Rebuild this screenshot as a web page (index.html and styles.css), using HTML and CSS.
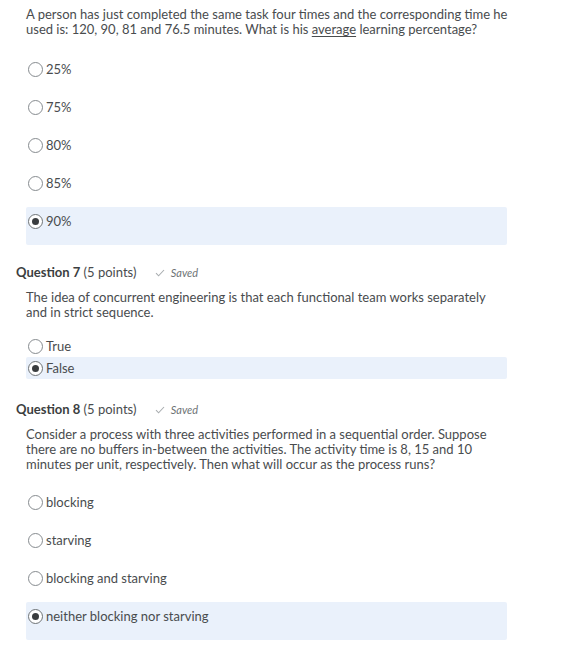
FILE: index.html
```html
<!DOCTYPE html>
<html>
<head>
<meta charset="utf-8">
<link rel="stylesheet" href="styles.css">
</head>
<body>
<div class="page">
  <section class="question">
    <div class="qbody">
      <p class="qtext wide">A person has just completed the same task four times and the corresponding time he used is: 120, 90, 81 and 76.5 minutes. What is his <u>average</u> learning percentage?</p>
      <div class="options tall">
        <div class="opt"><span class="radio"></span><span>25%</span></div>
        <div class="opt"><span class="radio"></span><span>75%</span></div>
        <div class="opt"><span class="radio"></span><span>80%</span></div>
        <div class="opt"><span class="radio"></span><span>85%</span></div>
        <div class="opt selected"><span class="radio checked"></span><span>90%</span></div>
      </div>
    </div>
  </section>

  <section class="question q7">
    <h3 class="qhead"><b>Question 7</b> (5 points) <span class="saved"><svg class="check" viewBox="0 0 10 8" width="10" height="8"><path d="M1 4.2 L3.6 6.8 L9 1" fill="none" stroke="#a9adb0" stroke-width="1.1"/></svg>Saved</span></h3>
    <div class="qbody">
      <p class="qtext">The idea of concurrent engineering is that each functional team works separately and in strict sequence.</p>
      <div class="options short">
        <div class="opt"><span class="radio"></span><span>True</span></div>
        <div class="opt selected"><span class="radio checked"></span><span>False</span></div>
      </div>
    </div>
  </section>

  <section class="question q8">
    <h3 class="qhead"><b>Question 8</b> (5 points) <span class="saved"><svg class="check" viewBox="0 0 10 8" width="10" height="8"><path d="M1 4.2 L3.6 6.8 L9 1" fill="none" stroke="#a9adb0" stroke-width="1.1"/></svg>Saved</span></h3>
    <div class="qbody">
      <p class="qtext">Consider a process with three activities performed in a sequential order. Suppose there are no buffers in-between the activities. The activity time is 8, 15 and 10 minutes per unit, respectively. Then what will occur as the process runs?</p>
      <div class="options tall">
        <div class="opt"><span class="radio"></span><span>blocking</span></div>
        <div class="opt"><span class="radio"></span><span>starving</span></div>
        <div class="opt"><span class="radio"></span><span>blocking and starving</span></div>
        <div class="opt selected"><span class="radio checked"></span><span>neither blocking nor starving</span></div>
      </div>
    </div>
  </section>
</div>
</body>
</html>
```

FILE: styles.css
```css
html, body {
  margin: 0;
  padding: 0;
  background: #ffffff;
}
body {
  font-family: Lato, "Open Sans", sans-serif;
  font-size: 13px;
  line-height: 15px;
  color: #494c4e;
}
.page {
  padding: 7px 0 0 16px;
  width: 491px;
}
.qbody {
  padding-left: 10px;
}
.qtext {
  margin: 0;
}
.qtext.wide {
  margin-right: -3px;
}
.qtext u {
  text-decoration-thickness: 1px;
  text-underline-offset: 2px;
}
.options.tall {
  margin-top: 18px;
}
.options.short {
  margin-top: 15px;
}
.opt {
  display: flex;
  align-items: center;
  gap: 3px;
  padding-left: 2px;
}
.tall .opt {
  height: 15px;
  padding-top: 7px;
  padding-bottom: 16px;
  align-items: flex-start;
}
.short .opt {
  height: 22px;
}
.opt.selected {
  background: #eaf1fb;
  border-radius: 2px;
}
.radio {
  box-sizing: border-box;
  width: 15px;
  height: 15px;
  border: 1px solid #868b8f;
  border-radius: 50%;
  background: #fff;
  flex: none;
  display: flex;
  align-items: center;
  justify-content: center;
}
.radio.checked {
  border-color: #6e7376;
}
.radio.checked::after {
  content: "";
  width: 7px;
  height: 7px;
  border-radius: 50%;
  background: #3a3d3f;
}
.question.q7 {
  margin-top: 20px;
}
.question.q8 {
  margin-top: 23px;
}
.qhead {
  margin: 0 0 10px 0;
  font-size: 13px;
  line-height: 15px;
  font-weight: normal;
  color: #494c4e;
}
.qhead b {
  font-weight: bold;
  color: #3b3e40;
}
.saved {
  margin-left: 15px;
  font-style: italic;
  font-size: 11px;
  color: #6e7376;
}
.check {
  margin-right: 6px;
  vertical-align: 0px;
}
.q8 .tall {
  margin-top: 16px;
}
```
